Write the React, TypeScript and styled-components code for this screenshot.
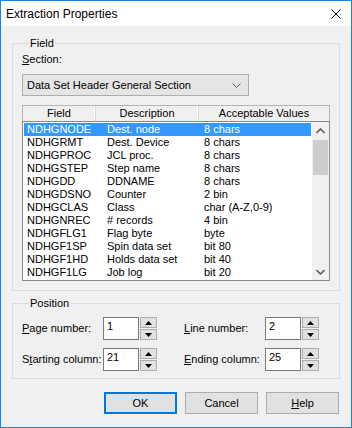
import React from "react";
import styled, { createGlobalStyle } from "styled-components";

const GlobalStyle = createGlobalStyle`
  html, body {
    margin: 0;
    padding: 0;
    background: #f0f0f0;
  }
  * {
    box-sizing: border-box;
  }
`;

const Window = styled.div`
  width: 352px;
  height: 428px;
  border: 1px solid #1883d7;
  background: #f0f0f0;
  display: flex;
  flex-direction: column;
  font-family: "Liberation Sans", Arial, sans-serif;
  font-size: 11px;
  color: #000;
  overflow: hidden;
`;

const TitleBar = styled.div`
  height: 25px;
  background: #fff;
  display: flex;
  align-items: center;
  justify-content: space-between;
  padding: 0 10px 0 5px;
  flex-shrink: 0;
`;

const Title = styled.span`
  font-size: 12px;
  line-height: 16px;
`;

const Body = styled.div`
  flex: 1;
  display: flex;
  flex-direction: column;
  padding: 11px 11px 0 11px;
`;

const Group = styled.fieldset<{ $gap?: number; $bottom?: number }>`
  margin: 0 0 ${(p) => p.$gap ?? 0}px 0;
  padding: 3px 9px ${(p) => p.$bottom ?? 10}px 9px;
  border: 1px solid #dcdcdc;
  min-inline-size: 0;
`;

const Legend = styled.legend`
  padding: 0 1px;
  margin-left: 7px;
  line-height: 13px;
`;

const Label = styled.div`
  line-height: 13px;
`;

const Accel = styled.span`
  text-decoration: underline;
  text-underline-offset: 1px;
`;

const Combo = styled.div`
  margin-top: 8px;
  width: 227px;
  height: 22px;
  background: #e5e5e5;
  border: 1px solid #adadad;
  display: flex;
  align-items: center;
  justify-content: space-between;
  padding: 0 7px 0 4px;
`;

const Header = styled.div`
  margin-top: 9px;
  display: flex;
  height: 16px;
  border: 1px solid #b5b5b5;
  border-bottom: none;
  background: #f0f0f0;
`;

const HeaderCell = styled.div<{ $w?: number }>`
  ${(p) => (p.$w ? `width: ${p.$w}px;` : "flex: 1;")}
  text-align: center;
  line-height: 15px;
  border-right: 1px solid #d9d9d9;
  box-shadow: inset -1px 0 0 #fff;
  &:last-child {
    border-right: none;
    box-shadow: none;
  }
`;

const ListBox = styled.div`
  height: 160px;
  border: 1px solid #828790;
  background: #fff;
  display: flex;
`;

const Rows = styled.div`
  flex: 1;
  padding: 1px 1px 0 1px;
  overflow: hidden;
`;

const Row = styled.div<{ $selected?: boolean }>`
  display: flex;
  height: 13px;
  line-height: 13px;
  white-space: nowrap;
  background: ${(p) => (p.$selected ? "#3399ff" : "transparent")};
  color: ${(p) => (p.$selected ? "#fff" : "#000")};
`;

const Cell = styled.div<{ $w?: number }>`
  ${(p) => (p.$w ? `width: ${p.$w}px;` : "flex: 1;")}
  padding-left: 3px;
`;

const ScrollBar = styled.div`
  width: 17px;
  background: #f0f0f0;
  display: flex;
  flex-direction: column;
`;

const ScrollArrow = styled.div`
  height: 17px;
  display: flex;
  align-items: center;
  justify-content: center;
`;

const Track = styled.div`
  flex: 1;
  padding: 1px 1px 0 1px;
`;

const Thumb = styled.div`
  height: 35px;
  background: #cdcdcd;
`;

const SpinGrid = styled.div`
  display: flex;
  flex-direction: column;
  gap: 8px;
  padding-top: 4px;
`;

const SpinRow = styled.div`
  display: flex;
  gap: 27px;
`;

const SpinField = styled.div`
  display: flex;
  align-items: center;
`;

const SpinLabel = styled.div`
  width: 81px;
  line-height: 13px;
`;

const SpinEdit = styled.div`
  width: 36px;
  height: 23px;
  background: #fff;
  border: 1px solid #7a7a7a;
  padding: 2px 0 0 3px;
  line-height: 13px;
`;

const SpinButtons = styled.div`
  width: 17px;
  height: 23px;
  margin-left: 1px;
  display: flex;
  flex-direction: column;
  gap: 1px;
`;

const SpinButton = styled.div`
  flex: 1;
  background: #e1e1e1;
  border: 1px solid #adadad;
  display: flex;
  align-items: center;
  justify-content: center;
`;

const ButtonRow = styled.div`
  display: flex;
  justify-content: flex-end;
  gap: 8px;
  margin-top: 13px;
  padding-right: 1px;
`;

const Button = styled.div<{ $default?: boolean }>`
  width: 73px;
  height: 22px;
  background: #e1e1e1;
  border: ${(p) => (p.$default ? "2px solid #0078d7" : "1px solid #adadad")};
  display: flex;
  align-items: center;
  justify-content: center;
`;

const rows = [
  ["NDHGNODE", "Dest. node", "8 chars"],
  ["NDHGRMT", "Dest. Device", "8 chars"],
  ["NDHGPROC", "JCL proc.", "8 chars"],
  ["NDHGSTEP", "Step name", "8 chars"],
  ["NDHGDD", "DDNAME", "8 chars"],
  ["NDHGDSNO", "Counter", "2 bin"],
  ["NDHGCLAS", "Class", "char (A-Z,0-9)"],
  ["NDHGNREC", "# records", "4 bin"],
  ["NDHGFLG1", "Flag byte", "byte"],
  ["NDHGF1SP", "Spin data set", "bit 80"],
  ["NDHGF1HD", "Holds data set", "bit 40"],
  ["NDHGF1LG", "Job log", "bit 20"],
];

const Triangle = ({ up }: { up?: boolean }) => (
  <svg width="7" height="4" viewBox="0 0 7 4">
    <polygon points={up ? "3.5,0 7,4 0,4" : "0,0 7,0 3.5,4"} fill="#000" />
  </svg>
);

const Chevron = ({ up }: { up?: boolean }) => (
  <svg width="9" height="6" viewBox="0 0 9 6">
    <polyline
      points={up ? "0.5,5 4.5,1 8.5,5" : "0.5,1 4.5,5 8.5,1"}
      fill="none"
      stroke="#606060"
      strokeWidth="1.6"
    />
  </svg>
);

const Spinner = ({
  label,
  value,
}: {
  label: React.ReactNode;
  value: string;
}) => (
  <SpinField>
    <SpinLabel>{label}</SpinLabel>
    <SpinEdit>{value}</SpinEdit>
    <SpinButtons>
      <SpinButton>
        <Triangle up />
      </SpinButton>
      <SpinButton>
        <Triangle />
      </SpinButton>
    </SpinButtons>
  </SpinField>
);

const App = () => {
  return (
    <>
      <GlobalStyle />
      <Window>
        <TitleBar>
          <Title>Extraction Properties</Title>
          <svg width="10" height="10" viewBox="0 0 10 10">
            <path d="M0.5 0.5 L9.5 9.5 M9.5 0.5 L0.5 9.5" stroke="#000" strokeWidth="1" />
          </svg>
        </TitleBar>
        <Body>
          <Group $gap={6} $bottom={9}>
            <Legend>Field</Legend>
            <Label>
              <Accel>S</Accel>ection:
            </Label>
            <Combo>
              <span>Data Set Header General Section</span>
              <svg width="9" height="5" viewBox="0 0 9 5">
                <polyline points="0.5,0.5 4.5,4.5 8.5,0.5" fill="none" stroke="#606060" strokeWidth="1" />
              </svg>
            </Combo>
            <Header>
              <HeaderCell $w={73}>Field</HeaderCell>
              <HeaderCell $w={103}>Description</HeaderCell>
              <HeaderCell>Acceptable Values</HeaderCell>
            </Header>
            <ListBox>
              <Rows>
                {rows.map((r, i) => (
                  <Row key={r[0]} $selected={i === 0}>
                    <Cell $w={80}>{r[0]}</Cell>
                    <Cell $w={97}>{r[1]}</Cell>
                    <Cell>{r[2]}</Cell>
                  </Row>
                ))}
              </Rows>
              <ScrollBar>
                <ScrollArrow>
                  <Chevron up />
                </ScrollArrow>
                <Track>
                  <Thumb />
                </Track>
                <ScrollArrow>
                  <Chevron />
                </ScrollArrow>
              </ScrollBar>
            </ListBox>
          </Group>
          <Group $bottom={7}>
            <Legend>Position</Legend>
            <SpinGrid>
              <SpinRow>
                <Spinner
                  label={
                    <>
                      <Accel>P</Accel>age number:
                    </>
                  }
                  value="1"
                />
                <Spinner
                  label={
                    <>
                      <Accel>L</Accel>ine number:
                    </>
                  }
                  value="2"
                />
              </SpinRow>
              <SpinRow>
                <Spinner
                  label={
                    <>
                      S<Accel>t</Accel>arting column:
                    </>
                  }
                  value="21"
                />
                <Spinner
                  label={
                    <>
                      <Accel>E</Accel>nding column:
                    </>
                  }
                  value="25"
                />
              </SpinRow>
            </SpinGrid>
          </Group>
          <ButtonRow>
            <Button $default>OK</Button>
            <Button>Cancel</Button>
            <Button>
              <span>
                <Accel>H</Accel>elp
              </span>
            </Button>
          </ButtonRow>
        </Body>
      </Window>
    </>
  );
};

export default App;
